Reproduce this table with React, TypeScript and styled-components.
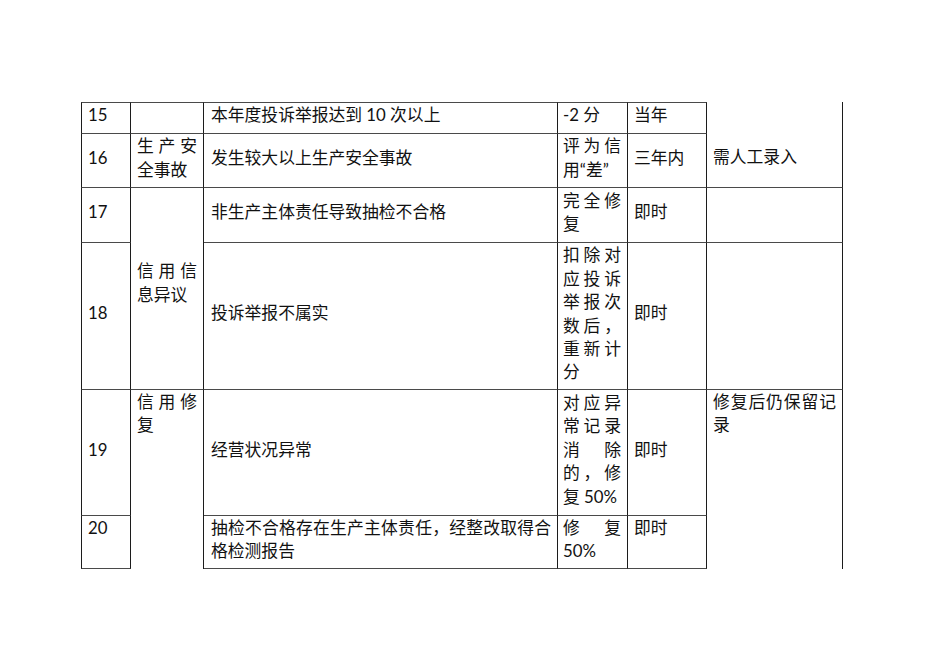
import React from "react";
import styled, { createGlobalStyle } from "styled-components";

const Global = createGlobalStyle`
  *, *::before, *::after { box-sizing: border-box; }
  html, body { margin: 0; padding: 0; background: #ffffff; }
  body {
    font-family: "Lato", "Noto Sans CJK SC", sans-serif;
    font-size: 16.8px;
    color: #111111;
  }
`;

const Page = styled.div`
  width: 950px;
  height: 672px;
  padding: 102px 0 0 81px;
`;

const Table = styled.div`
  display: grid;
  grid-template-columns: 50px 73px 354px 70px 79px 136px;
  grid-template-rows: 32px 54px 55px 147px 126px 53px;
  width: 762px;
`;

type Align = "start" | "center" | "end";

const Cell = styled.div<{
  $col: number;
  $span?: number;
  $top?: boolean;
  $left?: boolean;
  $noBottom?: boolean;
  $align?: Align;
  $padL?: number;
  $padR?: number;
  $padT?: number;
  $padB?: number;
}>`
  grid-column: ${(p) => p.$col};
  grid-row: span ${(p) => p.$span ?? 1};
  display: flex;
  flex-direction: column;
  justify-content: ${(p) =>
    p.$align === "start" ? "flex-start" : p.$align === "end" ? "flex-end" : "center"};
  border-right: 1px solid #1c1c1c;
  border-left: ${(p) => (p.$left ? "1px solid #1c1c1c" : "none")};
  border-top: ${(p) => (p.$top ? "1px solid #4a4a4a" : "none")};
  border-bottom: ${(p) => (p.$noBottom ? "none" : "1px solid #4a4a4a")};
  padding: ${(p) => p.$padT ?? 0}px ${(p) => p.$padR ?? 6}px ${(p) => p.$padB ?? 6}px
    ${(p) => p.$padL ?? 6}px;
  overflow: hidden;
`;

const Text = styled.div`
  width: 100%;
  line-height: 23.4px;
  text-align: justify;
  word-break: normal;
  line-break: strict;
`;

export default function App() {
  return (
    <>
      <Global />
      <Page>
        <Table>
          {/* Row 15 */}
          <Cell $col={1} $top $left>
            <Text>15</Text>
          </Cell>
          <Cell $col={2} $top />
          <Cell $col={3} $top $padL={7}>
            <Text>本年度投诉举报达到 10 次以上</Text>
          </Cell>
          <Cell $col={4} $top $padL={5}>
            <Text>-2 分</Text>
          </Cell>
          <Cell $col={5} $top>
            <Text>当年</Text>
          </Cell>
          <Cell $col={6} $span={2} $align="end" $padB={19}>
            <Text>需人工录入</Text>
          </Cell>

          {/* Row 16 */}
          <Cell $col={1} $left>
            <Text>16</Text>
          </Cell>
          <Cell $col={2}>
            <Text>生产安全事故</Text>
          </Cell>
          <Cell $col={3} $padL={7}>
            <Text>发生较大以上生产安全事故</Text>
          </Cell>
          <Cell $col={4} $padL={5}>
            <Text>评为信用“差”</Text>
          </Cell>
          <Cell $col={5}>
            <Text>三年内</Text>
          </Cell>

          {/* Row 17 */}
          <Cell $col={1} $left>
            <Text>17</Text>
          </Cell>
          <Cell $col={2} $span={2} $padB={12}>
            <Text>信用信息异议</Text>
          </Cell>
          <Cell $col={3} $padL={7}>
            <Text>非生产主体责任导致抽检不合格</Text>
          </Cell>
          <Cell $col={4} $padL={5}>
            <Text>完全修复</Text>
          </Cell>
          <Cell $col={5}>
            <Text>即时</Text>
          </Cell>
          <Cell $col={6} />

          {/* Row 18 */}
          <Cell $col={1} $left>
            <Text>18</Text>
          </Cell>
          <Cell $col={3} $padL={7}>
            <Text>投诉举报不属实</Text>
          </Cell>
          <Cell $col={4} $padL={5} $padB={5}>
            <Text>扣除对应投诉举报次数后，重新计分</Text>
          </Cell>
          <Cell $col={5}>
            <Text>即时</Text>
          </Cell>
          <Cell $col={6} />

          {/* Row 19 */}
          <Cell $col={1} $left>
            <Text>19</Text>
          </Cell>
          <Cell $col={2} $span={2} $align="start" $noBottom>
            <Text>信用修复</Text>
          </Cell>
          <Cell $col={3} $padL={7}>
            <Text>经营状况异常</Text>
          </Cell>
          <Cell $col={4} $padL={5}>
            <Text>对应异常记录消除的，修复 50%</Text>
          </Cell>
          <Cell $col={5}>
            <Text>即时</Text>
          </Cell>
          <Cell $col={6} $span={2} $align="start" $noBottom>
            <Text>修复后仍保留记录</Text>
          </Cell>

          {/* Row 20 */}
          <Cell $col={1} $left $align="start">
            <Text>20</Text>
          </Cell>
          <Cell $col={3} $padL={7} $align="start">
            <Text>抽检不合格存在生产主体责任，经整改取得合格检测报告</Text>
          </Cell>
          <Cell $col={4} $padL={5} $align="start">
            <Text>修复 50%</Text>
          </Cell>
          <Cell $col={5} $align="start">
            <Text>即时</Text>
          </Cell>
        </Table>
      </Page>
    </>
  );
}
